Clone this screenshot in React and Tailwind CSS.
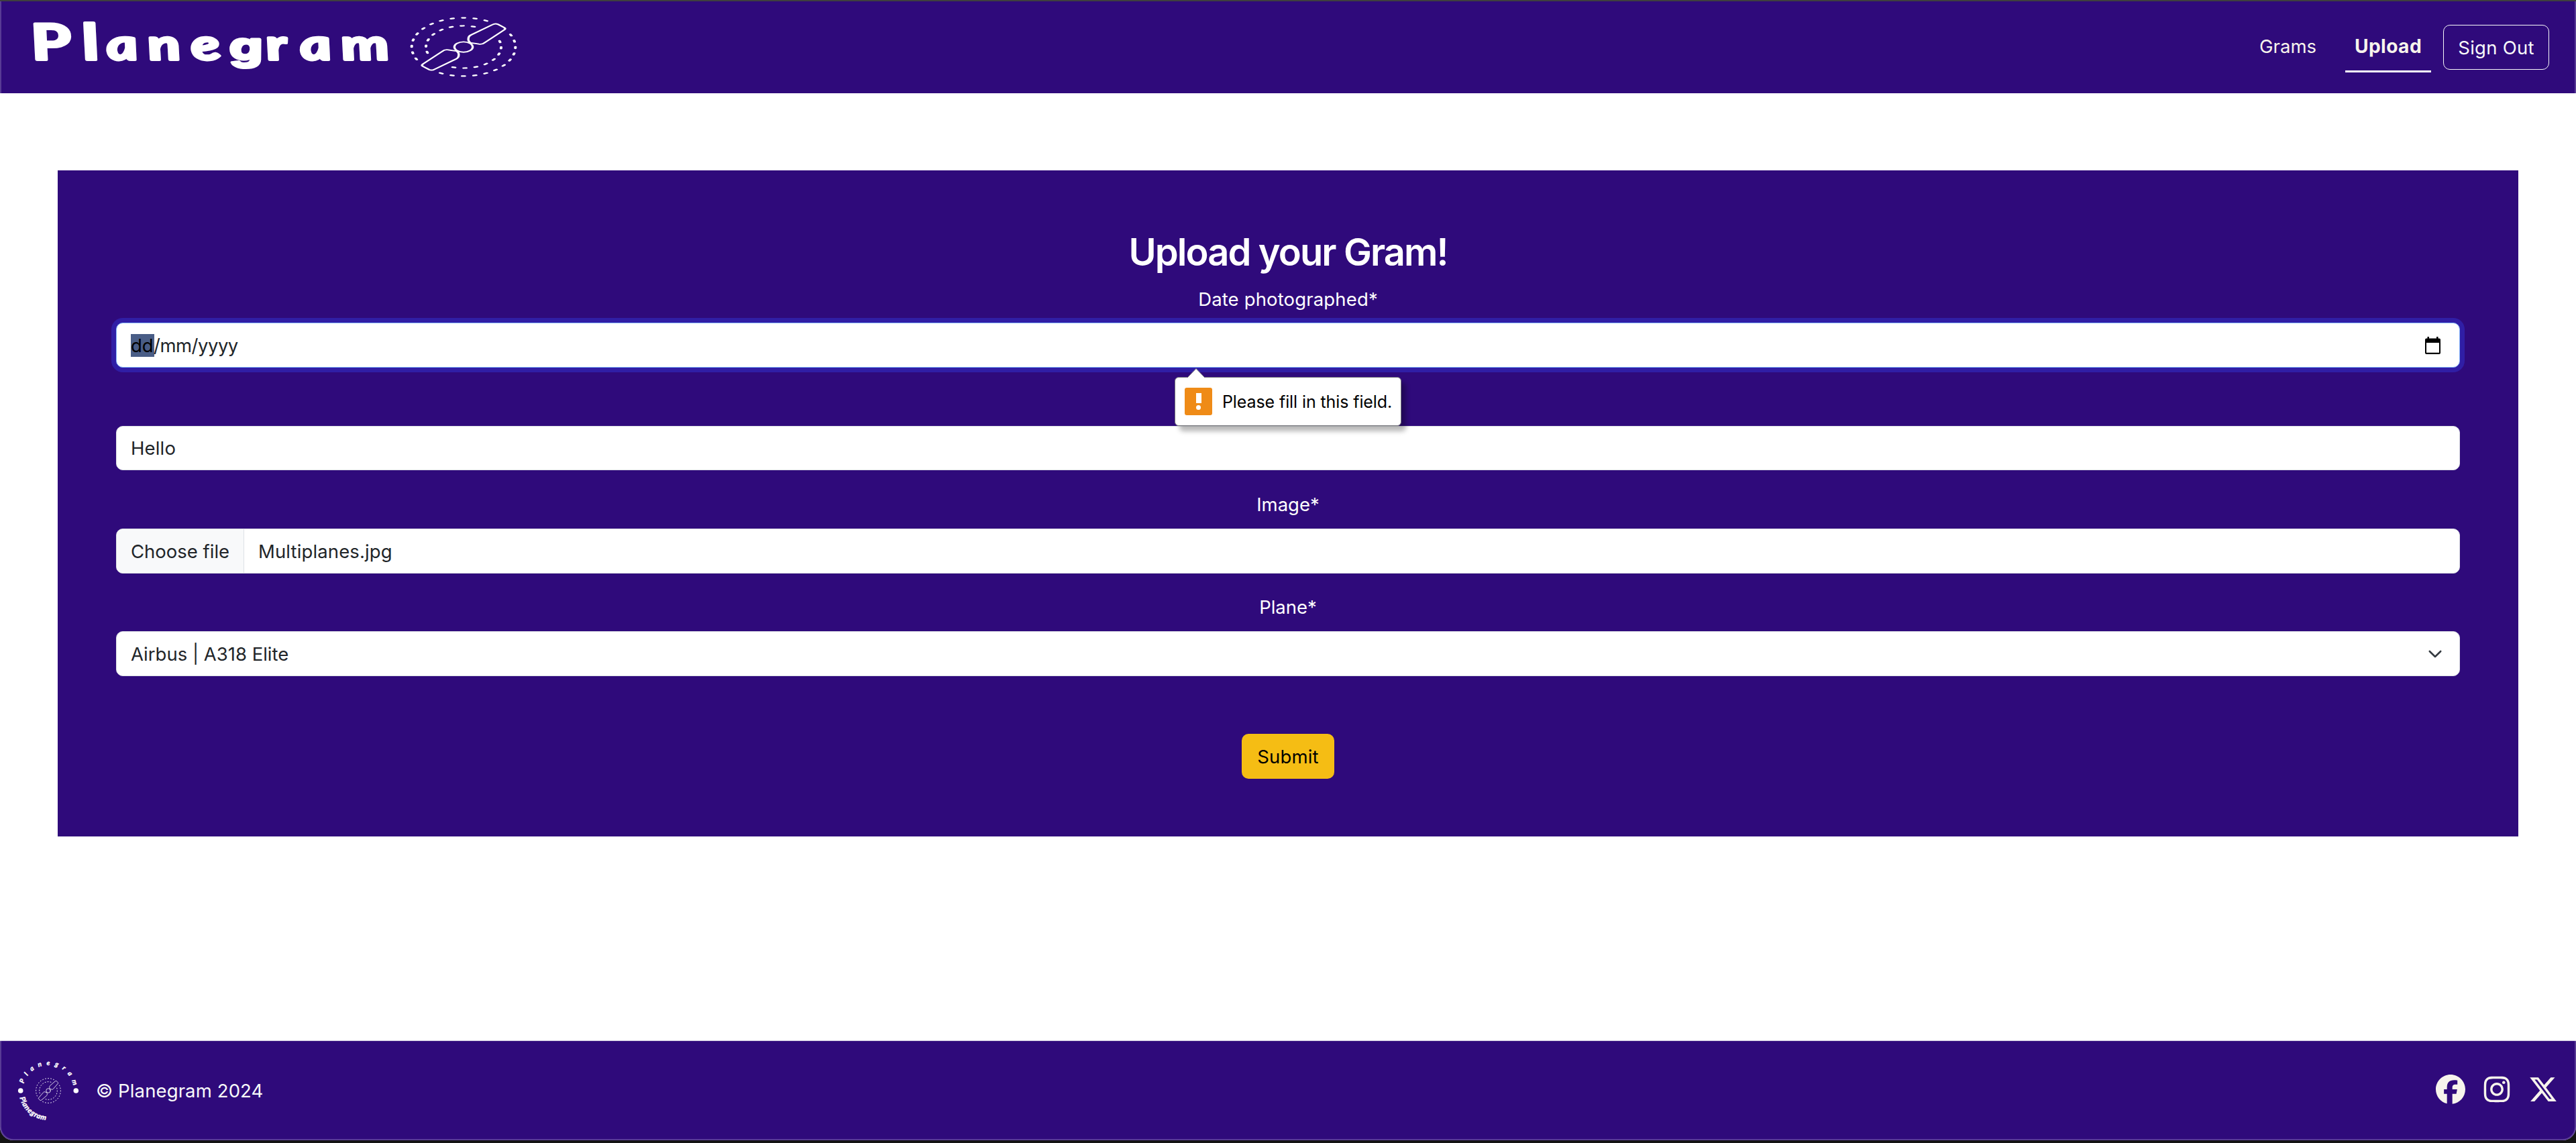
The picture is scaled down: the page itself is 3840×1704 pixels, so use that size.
import React from "react";
import { FaFacebook, FaInstagram, FaXTwitter } from "react-icons/fa6";

const polar = (r, deg) => {
  const a = (deg * Math.PI) / 180;
  return [r * Math.cos(a), r * Math.sin(a)];
};

// Evenly spaced round-capped dashes along an arc
function dashes(r, start, step, count) {
  const half = (6 / r) * (180 / Math.PI);
  return Array.from({ length: count }, (_, i) => {
    const mid = start - step * i;
    const [x1, y1] = polar(r, mid - half);
    const [x2, y2] = polar(r, mid + half);
    return `M${x1.toFixed(1)} ${y1.toFixed(1)}L${x2.toFixed(1)} ${y2.toFixed(1)}`;
  }).join("");
}

const BLADE =
  "M32 -32C22 -42 20 -56 22 -72Q23 -86 34 -96L130 -178Q142 -190 154 -180L182 -154Q190 -146 182 -136L96 -36Q84 -18 68 -23Q48 -30 32 -32Z";

function Propeller({ className }) {
  return (
    <svg
      className={className}
      viewBox="-240 -240 480 480"
      preserveAspectRatio="none"
      fill="none"
      stroke="white"
      strokeLinecap="round"
      strokeLinejoin="round"
    >
      <g strokeWidth="12">
        <path d={dashes(232, -64.5, 12.7, 12)} />
        <path d={dashes(232, 115.5, 12.7, 12)} />
        <path d={dashes(168, -75, 17.1, 8)} />
        <path d={dashes(168, 105, 17.1, 8)} />
      </g>
      <g strokeWidth="10">
        <circle r="41" />
        <path d={BLADE} />
        <path d={BLADE} transform="rotate(180)" />
      </g>
    </svg>
  );
}

function Wordmark() {
  return (
    <svg className="-ml-[20px] block h-[124px] w-[580px] shrink-0 overflow-visible" viewBox="-20 0 580 124">
      <text
        transform="translate(5 88.500) scale(1.4 1) skewX(9)"
        x="4.500 59 84 128 174 214.500 254 290 334"
        y="0"
        fill="white"
        stroke="white"
        strokeWidth="4"
        strokeLinejoin="round"
        className="font-['Lato',sans-serif] text-[64px] font-bold italic"
      >
        <tspan className="text-[74px]">Pl</tspan>ane
        <tspan className="font-['Inter',sans-serif] text-[56px] font-bold">g</tspan>ram
      </text>
    </svg>
  );
}

function Badge() {
  return (
    <div className="grid size-[100px] shrink-0 place-items-center">
      <svg className="col-start-1 row-start-1 size-[100px]" viewBox="-50 -50 100 100" fill="white">
        <defs>
          <path id="badge-top" d="M-38 0A38 38 0 0 1 38 0" />
          <path id="badge-bottom" d="M-44 0A44 44 0 0 0 0 44" />
        </defs>
        <circle cx="-41.3" r="3.8" />
        <circle cx="41.3" r="3.8" />
        <text className="font-['Lato',sans-serif] text-[10px] font-black italic" stroke="white" strokeWidth="0.3">
          <textPath href="#badge-top" startOffset="10.5" textLength="101" lengthAdjust="spacing">
            Planegram
          </textPath>
        </text>
        <text className="font-['Lato',sans-serif] text-[11px] font-black italic" stroke="white" strokeWidth="0.3">
          <textPath href="#badge-bottom" startOffset="10.5" textLength="55" lengthAdjust="spacing">
            Planegram
          </textPath>
        </text>
      </svg>
      <Propeller className="col-start-1 row-start-1 size-[38px]" />
    </div>
  );
}

function Label({ className = "", children }) {
  return <label className={`block h-[42px] text-center leading-[42px] text-white ${className}`}>{children}</label>;
}

function Field({ className = "", children }) {
  return (
    <div className={`flex items-center rounded-[10px] border bg-white whitespace-pre text-[#212529] ${className}`}>
      {children}
    </div>
  );
}

function Tooltip() {
  return (
    <div className="absolute top-[81px] left-[1578px] z-10 flex h-[73px] w-[338px] items-center rounded-[6px] border border-[#77777c] bg-white pl-[14px] shadow-[7px_8px_7px_rgba(0,0,0,0.28)]">
      <svg className="absolute -top-[14px] left-[17px] h-[15px] w-[28px]" viewBox="0 0 28 15">
        <path d="M0 15L14 0.5L28 15Z" fill="white" />
        <path d="M1 14L14 0.5L27 14" fill="none" stroke="#77777c" />
      </svg>
      <div className="flex h-[41px] w-[41px] flex-col items-center justify-center gap-[3px] rounded-[3px] bg-[#ef8b17]">
        <div className="h-[15px] w-[8px] bg-white" />
        <div className="size-[7px] rounded-full bg-white" />
      </div>
      <span className="ml-[15px] text-[25px] tracking-[-0.1px] whitespace-nowrap text-black">
        Please fill in this field.
      </span>
    </div>
  );
}

export default function App() {
  return (
    <div className="h-[1704px] w-[3840px] overflow-hidden bg-[#141414] font-['Inter',sans-serif] text-[27.5px] leading-[42px]">
      <div className="relative flex h-[1700px] flex-col overflow-hidden rounded-b-[20px] bg-white">
        <header className="flex h-[139px] shrink-0 items-start border-t-2 border-[#3f3f3f] bg-[#2f0a7b]">
          <div className="mt-[-2px] flex pl-[40px]">
            <Wordmark />
            <Propeller className="mt-[25px] ml-[11px] h-[90px] w-[160px]" />
          </div>
          <nav className="mr-[40px] ml-auto flex items-start text-[#f7f4ec]">
            <a className="mt-[46px] mr-[43px]">Grams</a>
            <a className="mt-[35px] flex h-[71px] w-[128px] justify-center border-b-[3px] border-white pt-[11px] text-[28.2px] font-bold tracking-[0.4px]">
              Upload
            </a>
            <button className="mt-[35px] ml-[18px] h-[67px] w-[158px] rounded-[10px] border border-[#f8f9fa] tracking-[0.25px] text-[#f8f9fa]">
              Sign Out
            </button>
          </nav>
        </header>

        <main className="mt-[115px] ml-[86px] h-[993px] w-[3668px] shrink-0 bg-[#2f0a7b] px-[87px] pt-[88px]">
          <h2 className="h-[68px] text-center text-[56px] leading-[68px] font-semibold tracking-[-1.9px] text-white">
            Upload your Gram!
          </h2>
          <Label className="mt-[15px] tracking-[0.15px]">Date photographed*</Label>
          <div className="relative mt-[14px]">
            <Field className="h-[67px] border-[#86b7fe] pr-[28px] pl-[21px] shadow-[0_0_0_7px_rgba(50,60,230,0.4)]">
              <span className="h-[34px] w-[35px] bg-[#495d86] leading-[34px] text-black">dd</span>
              <span className="-ml-px tracking-[-0.5px]">/mm/yyyy</span>
              <svg className="ml-auto h-[26px] w-[23px]" viewBox="0 0 23 26">
                <path
                  d="M3.5 0h2.5v2.5h11V0h2.5v2.5H21a2 2 0 0 1 2 2V24a2 2 0 0 1-2 2H2a2 2 0 0 1-2-2V4.5a2 2 0 0 1 2-2h1.5ZM2 9V23.8H21V9Z"
                  fill="black"
                  fillRule="evenodd"
                />
              </svg>
            </Field>
            <Tooltip />
          </div>
          <Field className="mt-[87px] h-[66px] border-[#dee2e6] pl-[21px] tracking-[0.15px]">Hello</Field>
          <Label className="mt-[30px]">Image*</Label>
          <Field className="mt-[15px] h-[67px] overflow-hidden border-[#dee2e6]">
            <span className="flex h-full w-[190px] items-center border-r border-[#dee2e6] bg-[#f8f9fa] pl-[21px]">
              Choose file
            </span>
            <span className="pl-[21px] tracking-[0.13px]">Multiplanes.jpg</span>
          </Field>
          <Label className="mt-[29px]">Plane*</Label>
          <Field className="mt-[15px] h-[67px] border-[#dee2e6] pr-[25px] pl-[21px]">
            Airbus | A318 Elite
            <svg
              className="ml-auto h-[14px] w-[22px]"
              viewBox="0 0 22 14"
              fill="none"
              stroke="#343a40"
              strokeWidth="2.6"
              strokeLinecap="round"
              strokeLinejoin="round"
            >
              <path d="M2.8 3L11 11L19.2 3" />
            </svg>
          </Field>
          <button className="mx-auto mt-[86px] block h-[67px] w-[138px] rounded-[10px] bg-[#f5bd14] tracking-[0.15px] text-black">
            Submit
          </button>
        </main>

        <footer className="mt-auto flex h-[149px] shrink-0 items-center border-t border-[#cfcadf] bg-[#2f0a7b] pr-[27px] pl-[22px]">
          <Badge />
          <span className="ml-[21px] tracking-[0.12px] text-[#f8f9fa]">© Planegram 2024</span>
          <div className="ml-auto flex gap-[25px] pb-[4px] text-[44px] text-[#f7f4ec]">
            <FaFacebook />
            <FaInstagram />
            <FaXTwitter />
          </div>
        </footer>
        <div className="pointer-events-none absolute inset-x-0 top-[2px] bottom-0 rounded-b-[20px] border-x-2 border-b-2 border-white/20" />
      </div>
    </div>
  );
}
